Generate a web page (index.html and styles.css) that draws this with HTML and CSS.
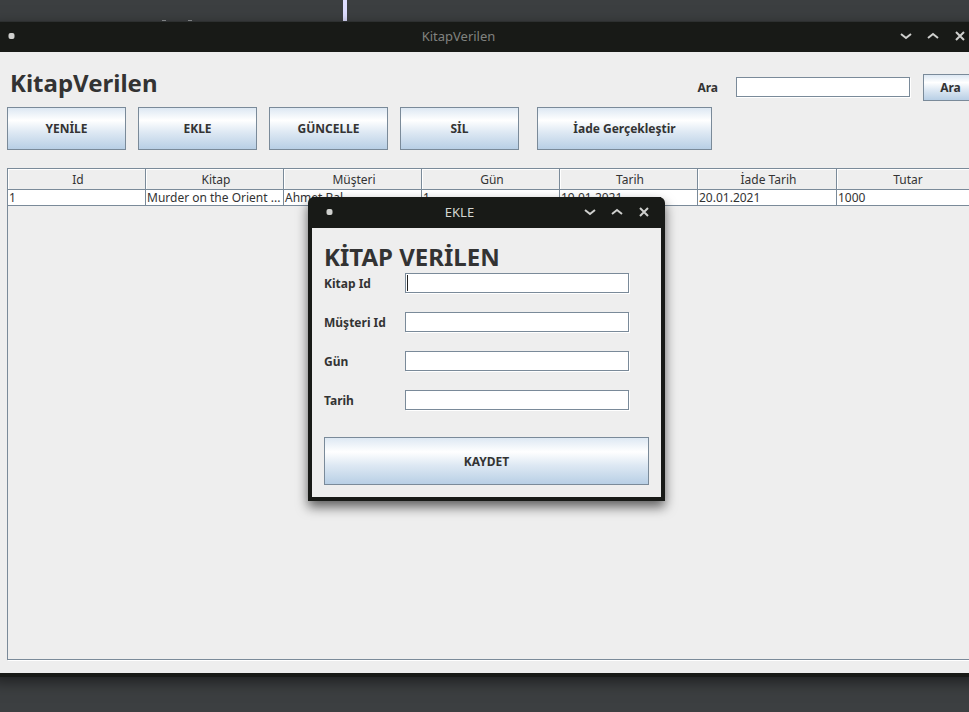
FILE: index.html
```html
<!DOCTYPE html>
<html lang="tr">
<head>
<meta charset="utf-8">
<meta name="viewport" content="width=device-width, initial-scale=1">
<title>KitapVerilen</title>
<link rel="stylesheet" href="styles.css">
</head>
<body>
<div class="desktop">
  <div class="backdrop" aria-hidden="true">
    <span class="backdrop-mark"></span>
    <span class="backdrop-mark"></span>
    <span class="backdrop-bar"></span>
  </div>

  <main class="window window-main">
    <header class="titlebar titlebar-inactive">
      <button class="win-button" type="button" aria-label="Menü"><svg viewBox="0 0 14 14"><rect x="3.5" y="4" width="6" height="6" rx="2" fill="currentColor"/></svg></button>
      <span class="titlebar-text">KitapVerilen</span>
      <button class="win-button" type="button" aria-label="Küçült"><svg viewBox="0 0 14 14"><path d="M2 5l5 4 5-4"/></svg></button>
      <button class="win-button" type="button" aria-label="Büyüt"><svg viewBox="0 0 14 14"><path d="M2 9l5-4 5 4"/></svg></button>
      <button class="win-button" type="button" aria-label="Kapat"><svg viewBox="0 0 14 14"><path d="M3 3l8 8M11 3l-8 8"/></svg></button>
    </header>
    <div class="content">
      <div class="heading-row">
        <h1 class="heading">KitapVerilen</h1>
        <form class="search">
          <label for="search">Ara</label>
          <input class="field search-field" id="search" type="text">
          <button class="button search-button" type="button">Ara</button>
        </form>
      </div>
      <div class="toolbar">
        <button class="button tool" type="button">YENİLE</button>
        <button class="button tool" type="button">EKLE</button>
        <button class="button tool" type="button">GÜNCELLE</button>
        <button class="button tool" type="button">SİL</button>
        <button class="button tool tool-wide" type="button">İade Gerçekleştir</button>
      </div>
      <div class="table-pane">
        <table class="records">
          <colgroup>
            <col class="col"><col class="col"><col class="col"><col class="col"><col class="col"><col class="col-return"><col>
          </colgroup>
          <thead>
            <tr><th>Id</th><th>Kitap</th><th>Müşteri</th><th>Gün</th><th>Tarih</th><th>İade Tarih</th><th>Tutar</th></tr>
          </thead>
          <tbody>
            <tr><td>1</td><td>Murder on the Orient ...</td><td>Ahmet Bal</td><td>1</td><td>19.01.2021</td><td>20.01.2021</td><td>1000</td></tr>
          </tbody>
        </table>
      </div>
    </div>
  </main>

  <section class="window dialog" role="dialog" aria-labelledby="dialog-title">
    <header class="titlebar">
      <button class="win-button" type="button" aria-label="Menü"><svg viewBox="0 0 14 14"><rect x="3.5" y="4" width="6" height="6" rx="2" fill="currentColor"/></svg></button>
      <span class="titlebar-text" id="dialog-title">EKLE</span>
      <button class="win-button" type="button" aria-label="Küçült"><svg viewBox="0 0 14 14"><path d="M2 5l5 4 5-4"/></svg></button>
      <button class="win-button" type="button" aria-label="Büyüt"><svg viewBox="0 0 14 14"><path d="M2 9l5-4 5 4"/></svg></button>
      <button class="win-button" type="button" aria-label="Kapat"><svg viewBox="0 0 14 14"><path d="M3 3l8 8M11 3l-8 8"/></svg></button>
    </header>
    <form class="dialog-form">
      <h2 class="heading dialog-heading">KİTAP VERİLEN</h2>
      <div class="fields">
        <label for="book">Kitap Id</label><input class="field field-active" id="book" type="text">
        <label for="customer">Müşteri Id</label><input class="field" id="customer" type="text">
        <label for="days">Gün</label><input class="field" id="days" type="text">
        <label for="date">Tarih</label><input class="field" id="date" type="text">
      </div>
      <button class="button save" type="button">KAYDET</button>
    </form>
  </section>
</div>
</body>
</html>
```
FILE: styles.css
```css
:root {
  --line: #7a8a99;
  --face: #eeeeee;
  --frame: #181a17;
  --ink: #333333;
}

* {
  box-sizing: border-box;
}

body {
  margin: 0;
  background: #3c3f41;
  color: var(--ink);
  font: 12px/16px "Noto Sans", sans-serif;
}

.desktop {
  position: relative;
  display: flex;
  flex-direction: column;
  min-height: 100vh;
  padding-bottom: 35px;
  overflow: hidden;
}

/* Application behind the windows */
.backdrop {
  display: flex;
  align-items: flex-end;
  gap: 22px;
  height: 21px;
  padding-left: 162px;
}

.backdrop-mark {
  width: 4px;
  height: 1px;
  background: #8f9294;
}

.backdrop-bar {
  width: 4px;
  height: 21px;
  margin-left: 129px;
  background: #dedeff;
}

/* Window frames */
.window {
  display: flex;
  flex-direction: column;
  border: 4px solid var(--frame);
  border-top: 0;
  background: var(--face);
}

.window-main {
  flex: 1;
  margin: 0 -13px 0 -9px;
  border-top: 1px solid #2d3030;
  box-shadow: 0 5px 14px rgba(0, 0, 0, 0.5);
}

.titlebar {
  display: flex;
  align-items: center;
  height: 30px;
  padding: 0 4px 2px;
  background: var(--frame);
  color: #d4d6d2;
}

.titlebar-text {
  flex: 1;
  font-size: 13px;
  line-height: 18px;
  text-align: center;
}

.titlebar-inactive {
  padding: 0 5px 2px 3px;
}

.titlebar-inactive .titlebar-text {
  color: #80827f;
}

.win-button {
  display: grid;
  place-items: center;
  width: 27px;
  height: 28px;
  padding: 0;
  border: 0;
  background: none;
  color: #cfd0ce;
}

.win-button svg {
  width: 14px;
  height: 14px;
  fill: none;
  stroke: currentColor;
  stroke-width: 2;
}

.win-button rect {
  stroke: none;
}

/* Shared controls */
.heading {
  margin: 0;
  font-size: 24px;
  font-weight: 700;
  line-height: 18px;
}

label {
  font-weight: 700;
}

.button {
  padding: 0;
  border: 1px solid var(--line);
  background: linear-gradient(#dde8f3, #ffffff 30%, #dde8f3 60%, #b8cfe5);
  color: var(--ink);
  font: inherit;
  font-weight: 700;
}

.field {
  height: 20px;
  padding: 0 2px;
  border: 1px solid var(--line);
  outline: 0;
  background: #ffffff;
  box-shadow: 1px 1px 0 #ffffff;
  color: var(--ink);
  font: inherit;
}

.field-active {
  background: linear-gradient(#222222, #222222) 1px 1px / 1px 16px no-repeat #ffffff;
}

/* Main window */
.content {
  display: flex;
  flex: 1;
  flex-direction: column;
  padding: 22px 0 13px 12px;
}

.heading-row {
  display: flex;
  justify-content: space-between;
  margin-bottom: 6px;
  padding-left: 3px;
}

.search {
  display: flex;
  align-items: center;
}

.search-field {
  width: 174px;
  margin: 0 13px 1px 18px;
}

.search-button {
  width: 55px;
  height: 27px;
}

.toolbar {
  display: flex;
  gap: 12px;
  margin-bottom: 18px;
}

.tool {
  width: 119px;
  height: 43px;
}

.tool-wide {
  width: 175px;
  margin-left: 6px;
}

.table-pane {
  flex: 1;
  border: 1px solid var(--line);
  box-shadow: 1px 1px 0 #ffffff;
}

.records {
  width: 100%;
  border-spacing: 0;
  table-layout: fixed;
}

.col {
  width: 138px;
}

.col-return {
  width: 139px;
}

.records th,
.records td {
  overflow: hidden;
  border: 0 solid var(--line);
  border-width: 0 1px 1px 0;
  white-space: nowrap;
}

.records th {
  height: 21px;
  padding: 2px 0 0 3px;
  box-shadow: inset 1px 1px 0 #ffffff;
  font-weight: 400;
}

.records td {
  height: 16px;
  padding: 0 1px;
  background: #ffffff;
  line-height: 15px;
}

/* Add-record dialog */
.dialog {
  position: absolute;
  top: 197px;
  left: 308px;
  width: 357px;
  border-radius: 6px 6px 0 0;
  box-shadow: 0 6px 12px rgba(0, 0, 0, 0.6);
}

.dialog .titlebar {
  height: 31px;
}

.dialog-form {
  padding: 20px 12px 12px;
}

.dialog-heading {
  margin-bottom: 7px;
}

.fields {
  display: grid;
  grid-template-columns: 81px 1fr;
  align-items: center;
  row-gap: 19px;
  margin: 0 20px 27px 0;
}

.fields label {
  padding-top: 2px;
}

.save {
  width: 100%;
  height: 48px;
  padding-top: 2px;
}
```
